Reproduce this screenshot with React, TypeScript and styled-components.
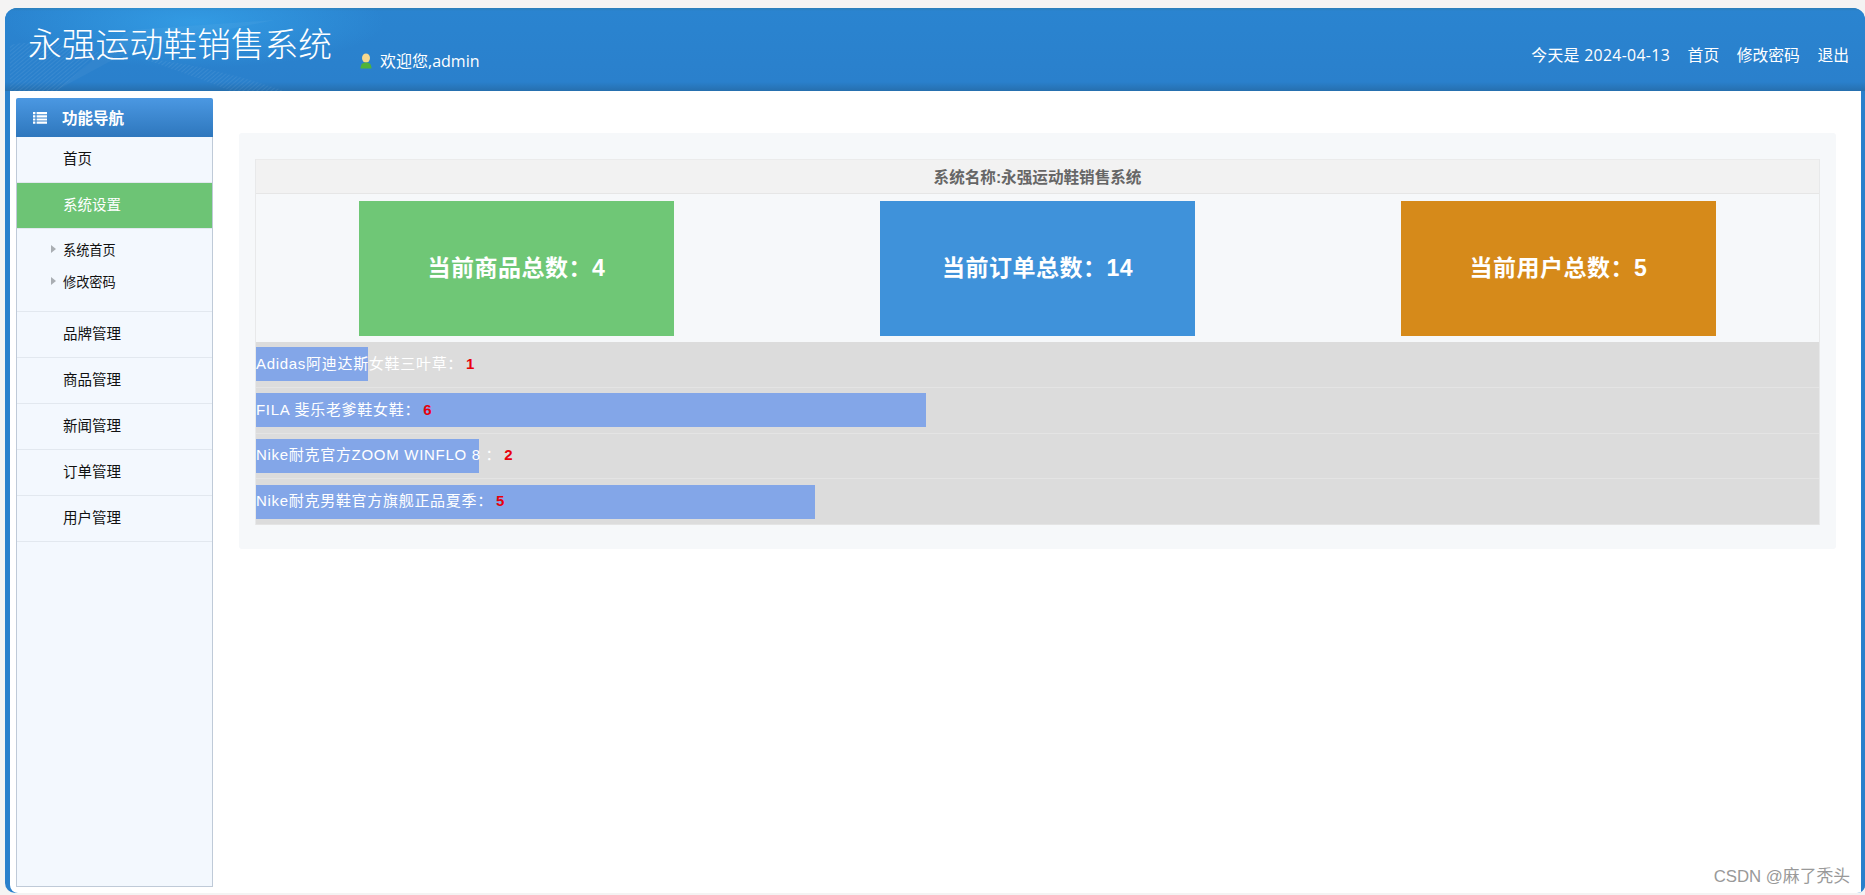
import { createGlobalStyle, styled } from "styled-components";

const CJK = `"Noto Sans CJK SC", sans-serif`;
const UI_FONT = `"Open Sans", ${CJK}`;
const ARIAL_FONT = `"Liberation Sans", ${CJK}`;
const BAR_UNIT = 111.7;

const GlobalStyle = createGlobalStyle`
  html, body {
    margin: 0;
    padding: 0;
    height: 895px;
    overflow: hidden;
    background-color: #f4f3f3;
    font-family: ${UI_FONT};
  }
`;

const Page = styled.div`
  position: relative;
  box-sizing: border-box;
  height: 895px;
  padding: 8px 0 2px 5px;
`;

const Frame = styled.div`
  display: flex;
  flex-direction: column;
  height: 100%;
  border-radius: 12px 12px 8px 10px;
  background-color: #2a80cc;
  overflow: hidden;
`;

const Header = styled.header`
  position: relative;
  display: flex;
  flex: none;
  height: 83px;
  color: #fff;
  background:
    radial-gradient(ellipse 190px 46px at 190px 14px, rgba(56, 170, 240, 0.6), rgba(56, 170, 240, 0) 100%),
    linear-gradient(180deg, #2b7db8 0, #2a84d0 3px, #2a80cc 74px, #266fae 83px);
`;

const HeaderArt = styled.svg`
  position: absolute;
  left: 0;
  top: 0;
  pointer-events: none;
`;

const SiteTitle = styled.h1`
  position: relative;
  flex: none;
  width: 332px;
  margin: 0;
  padding: 12px 0 0 23px;
  box-sizing: border-box;
  font-size: 33.8px;
  line-height: 48px;
  font-weight: 300;
  white-space: nowrap;
`;

const Welcome = styled.div`
  position: relative;
  display: flex;
  align-items: center;
  gap: 8px;
  margin: 42px 0 0 23px;
  height: 22px;
  font-size: 16px;
  line-height: 22px;
`;

const HeaderLinks = styled.nav`
  display: flex;
  gap: 17.5px;
  margin: 36px 16px 0 auto;
  height: 22px;
  font-size: 15.8px;
  line-height: 22px;
  white-space: nowrap;
`;

const DateText = styled.span`
  letter-spacing: 0.35px;
`;

const Main = styled.div`
  display: flex;
  flex: 1;
  min-height: 0;
  margin: 0 0 0 5px;
  padding: 7px 25px 6px 6px;
  border-radius: 0 0 0 8px;
  border-right: 4px solid #2a80cc;
  background-color: #fff;
`;

const Sidebar = styled.aside`
  display: flex;
  flex: none;
  flex-direction: column;
  width: 197px;
`;

const SideTitle = styled.div`
  display: flex;
  flex: none;
  align-items: center;
  gap: 15px;
  height: 39px;
  padding-left: 17px;
  border-radius: 2px 2px 0 0;
  color: #fff;
  font-size: 15.5px;
  font-weight: 700;
  background: linear-gradient(180deg, #4b98e2 0, #2e77bd 100%);
`;

const SideBody = styled.div`
  flex: 1;
  border: 1px solid #bfcad8;
  border-top: 0;
  background-color: #f3f8fe;
`;

const MenuItem = styled.div<{ $active?: boolean }>`
  box-sizing: border-box;
  height: 46px;
  padding-left: 46px;
  border-bottom: 1px solid #e2e8ef;
  color: ${(props) => (props.$active ? "#fff" : "#111")};
  background-color: ${(props) => (props.$active ? "#6dc475" : "transparent")};
  font-size: 14.5px;
  line-height: 44.5px;
`;

const SubMenu = styled.div`
  box-sizing: border-box;
  height: 83px;
  padding-top: 4px;
  border-bottom: 1px solid #e2e8ef;
`;

const SubItem = styled.div`
  display: flex;
  align-items: center;
  gap: 7px;
  height: 32px;
  padding-left: 34px;
  color: #111;
  font-size: 13.2px;
`;

const Arrow = styled.span`
  width: 0;
  height: 0;
  border-left: 5px solid #a9aeb3;
  border-top: 4px solid transparent;
  border-bottom: 4px solid transparent;
`;

const Content = styled.main`
  flex: 1;
  min-width: 0;
  padding: 35px 0 0 26px;
`;

const Panel = styled.section`
  box-sizing: border-box;
  height: 416px;
  padding: 26px 16px 24px;
  border-radius: 3px;
  background-color: #f6f8fa;
`;

const Board = styled.div`
  display: flex;
  flex-direction: column;
  height: 366px;
  border: 1px solid #e8e9ea;
  border-top: 0;
  border-bottom: 0;
  box-sizing: border-box;
`;

const BoardTitle = styled.div`
  flex: none;
  box-sizing: border-box;
  height: 35px;
  border-top: 1px solid #ebebeb;
  border-bottom: 1px solid #e6e6e6;
  background-color: #f2f2f2;
  color: #666;
  font-family: ${ARIAL_FONT};
  font-size: 15.6px;
  font-weight: 700;
  line-height: 35px;
  text-align: center;
`;

const StatRow = styled.div`
  display: grid;
  flex: none;
  grid-template-columns: repeat(3, 1fr);
  justify-items: center;
  height: 148px;
  padding: 7px 0 6px;
  box-sizing: border-box;
`;

const StatCard = styled.div<{ $color: string }>`
  display: flex;
  align-items: center;
  justify-content: center;
  box-sizing: border-box;
  width: 315px;
  height: 135px;
  padding-bottom: 6px;
  background-color: ${(props) => props.$color};
  color: #fff;
  font-family: ${ARIAL_FONT};
  font-size: 23px;
  font-weight: 700;
  letter-spacing: 0.5px;
`;

const BarRow = styled.div`
  display: grid;
  align-items: center;
  flex: 1;
  border-bottom: 1px solid #e4e4e4;
  background-color: #dcdcdc;
`;

const BarFill = styled.div`
  grid-area: 1 / 1;
  height: 34px;
  background-color: #83a6e8;
`;

const BarLabel = styled.div`
  grid-area: 1 / 1;
  margin-top: -4px;
  color: #fff;
  font-family: ${ARIAL_FONT};
  font-size: 15px;
  letter-spacing: 0.7px;
  white-space: nowrap;
`;

const BarValue = styled.b`
  color: #e8000c;
  margin-left: 3px;
`;

const Watermark = styled.div`
  position: absolute;
  right: 15px;
  bottom: 8px;
  color: #999;
  font-family: ${ARIAL_FONT};
  font-size: 16.8px;
  line-height: 20px;
`;

const menuAfter = ["品牌管理", "商品管理", "新闻管理", "订单管理", "用户管理"];

const stats = [
  { label: "当前商品总数：", value: 4, color: "#6fc776" },
  { label: "当前订单总数：", value: 14, color: "#3f92da" },
  { label: "当前用户总数：", value: 5, color: "#d68a1a" },
];

const sales = [
  { name: "Adidas阿迪达斯女鞋三叶草：", value: 1 },
  { name: "FILA 斐乐老爹鞋女鞋：", value: 6 },
  { name: "Nike耐克官方ZOOM WINFLO 8 ：", value: 2 },
  { name: "Nike耐克男鞋官方旗舰正品夏季：", value: 5 },
];

const UserIcon = () => (
  <svg width="12" height="16" viewBox="0 0 12 16">
    <ellipse cx="6" cy="5" rx="4" ry="4.6" fill="#f6d88e" />
    <path d="M0.5 15.5 C0.5 11 3 9.5 6 9.5 C9 9.5 11.5 11 11.5 15.5 Z" fill="#4fb33a" />
  </svg>
);

const ListIcon = () => (
  <svg width="14" height="12" viewBox="0 0 14 12" fill="#fff">
    <path d="M0 0h2.4v2.2H0zM3.6 0H14v2.2H3.6zM0 3.2h2.4v2.2H0zM3.6 3.2H14v2.2H3.6zM0 6.4h2.4v2.2H0zM3.6 6.4H14v2.2H3.6zM0 9.6h2.4v2.2H0zM3.6 9.6H14v2.2H3.6z" />
  </svg>
);

const HeaderDecor = () => (
  <HeaderArt width="340" height="83" viewBox="0 0 340 83">
    <defs>
      <pattern id="hatch" width="3" height="3" patternUnits="userSpaceOnUse" patternTransform="rotate(-40)">
        <line x1="0" y1="0" x2="3" y2="0" stroke="#fff" strokeOpacity="0.14" />
      </pattern>
    </defs>
    <path d="M5 37 C40 30 80 40 95 45 L52 83 L5 83 Z" fill="url(#hatch)" />
    <path d="M135 50 C190 55 240 70 280 83 L225 83 C200 72 165 60 135 50 Z" fill="url(#hatch)" />
    <path d="M50 83 L125 22 L270 12 L130 40 Z" fill="#fff" fillOpacity="0.04" />
  </HeaderArt>
);

export default function App() {
  return (
    <>
      <GlobalStyle />
      <Page>
        <Frame>
          <Header>
            <HeaderDecor />
            <SiteTitle>永强运动鞋销售系统</SiteTitle>
            <Welcome>
              <UserIcon />
              <span>欢迎您,admin</span>
            </Welcome>
            <HeaderLinks>
              <DateText>今天是 2024-04-13</DateText>
              <span>首页</span>
              <span>修改密码</span>
              <span>退出</span>
            </HeaderLinks>
          </Header>
          <Main>
            <Sidebar>
              <SideTitle>
                <ListIcon />
                功能导航
              </SideTitle>
              <SideBody>
                <MenuItem>首页</MenuItem>
                <MenuItem $active>系统设置</MenuItem>
                <SubMenu>
                  <SubItem>
                    <Arrow />
                    系统首页
                  </SubItem>
                  <SubItem>
                    <Arrow />
                    修改密码
                  </SubItem>
                </SubMenu>
                {menuAfter.map((name) => (
                  <MenuItem key={name}>{name}</MenuItem>
                ))}
              </SideBody>
            </Sidebar>
            <Content>
              <Panel>
                <Board>
                  <BoardTitle>系统名称:永强运动鞋销售系统</BoardTitle>
                  <StatRow>
                    {stats.map((stat) => (
                      <StatCard key={stat.label} $color={stat.color}>
                        {stat.label}
                        {stat.value}
                      </StatCard>
                    ))}
                  </StatRow>
                  {sales.map((item) => (
                    <BarRow key={item.name}>
                      <BarFill style={{ width: item.value * BAR_UNIT }} />
                      <BarLabel>
                        {item.name}
                        <BarValue>{item.value}</BarValue>
                      </BarLabel>
                    </BarRow>
                  ))}
                </Board>
              </Panel>
            </Content>
          </Main>
        </Frame>
        <Watermark>CSDN @麻了秃头</Watermark>
      </Page>
    </>
  );
}
